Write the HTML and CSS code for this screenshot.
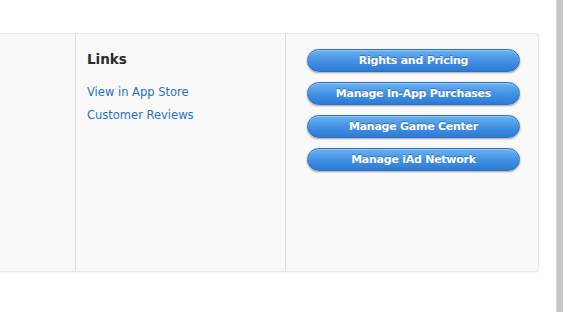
FILE: index.html
```html
<!DOCTYPE html>
<html>
<head>
<meta charset="utf-8">
<link rel="stylesheet" href="styles.css">
</head>
<body>
<div class="page">
  <div class="main">
    <div class="panel">
      <div class="col col-first"></div>
      <div class="col col-links">
        <h3 class="heading">Links</h3>
        <a class="link" href="#">View in App Store</a>
        <a class="link" href="#">Customer Reviews</a>
      </div>
      <div class="col col-actions">
        <button class="btn">Rights and Pricing</button>
        <button class="btn">Manage In-App Purchases</button>
        <button class="btn">Manage Game Center</button>
        <button class="btn">Manage iAd Network</button>
      </div>
    </div>
  </div>
  <div class="edge"></div>
</div>
</body>
</html>
```
FILE: styles.css
```css
html, body {
  margin: 0;
  padding: 0;
  background: #ffffff;
}
body {
  font-family: "DejaVu Sans", "Liberation Sans", sans-serif;
}
.page {
  display: flex;
  height: 312px;
  overflow: hidden;
}
.main {
  width: 557px;
  padding-top: 33px;
}
.edge {
  width: 6px;
  background: #c6c6c6;
  border-left: 1px solid #d6d6d6;
}
.panel {
  display: flex;
  width: 539px;
  height: 239px;
  background: #f9f9f9;
  border: 1px solid #e6e6e6;
  border-left: none;
  border-radius: 0 3px 3px 0;
  box-shadow: 0 1px 1px rgba(0,0,0,0.05);
  box-sizing: border-box;
}
.col {
  box-sizing: border-box;
}
.col-first {
  width: 76px;
  border-right: 1px solid #dadada;
}
.col-links {
  width: 210px;
  border-right: 1px solid #dadada;
  padding: 15px 11px;
  display: flex;
  flex-direction: column;
}
.heading {
  margin: 0 0 12px;
  font-size: 13.5px;
  font-weight: bold;
  color: #2a2a2a;
  line-height: 20px;
}
.link {
  font-size: 11.5px;
  line-height: 23px;
  color: #2574b8;
  text-decoration: none;
}
.col-actions {
  flex: 1;
  padding: 15px 0 0 21px;
  display: flex;
  flex-direction: column;
  gap: 10px;
}
.btn {
  width: 213px;
  height: 23px;
  border-radius: 12px;
  border: 1px solid #2f6fba;
  background: linear-gradient(#6ab2f2 0%, #4592e4 50%, #2c7ad6 100%);
  box-shadow: 0 1px 2px rgba(0,0,0,0.35), inset 0 1px 0 rgba(255,255,255,0.3);
  color: #ffffff;
  font-family: "DejaVu Sans", "Liberation Sans", sans-serif;
  font-size: 11px;
  letter-spacing: -0.25px;
  font-weight: bold;
  text-shadow: 0 -1px 0 rgba(0,0,0,0.3);
  padding: 0;
  cursor: pointer;
}
```
